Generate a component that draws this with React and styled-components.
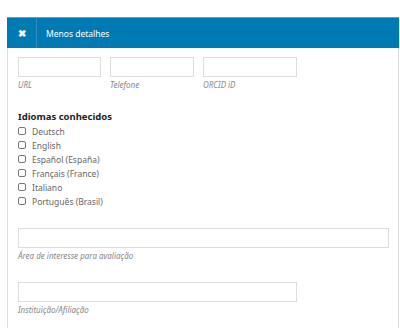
import React from "react";
import styled, { createGlobalStyle } from "styled-components";

const GlobalStyle = createGlobalStyle`
  body {
    margin: 0;
    background: #fff;
    font-family: "Noto Sans", "Open Sans", sans-serif;
  }
`;

const Panel = styled.div`
  margin: 17px 0 0 7px;
  width: 392px;
  height: 311px;
  box-sizing: border-box;
  border-left: 1px solid #ddd;
  border-right: 1px solid #ddd;
`;

const Header = styled.div`
  display: flex;
  align-items: stretch;
  height: 31px;
  box-sizing: border-box;
  background: #007ab2;
  border-top: 1px solid #4fa6cf;
  margin-left: -1px;
  margin-right: -1px;
  color: #fff;
`;

const CloseButton = styled.div`
  width: 29px;
  display: flex;
  align-items: center;
  justify-content: center;
  border-right: 1px solid #2b8fbf;
  font-size: 10px;
  font-weight: 700;
`;

const HeaderTitle = styled.div`
  display: flex;
  align-items: center;
  padding-left: 9px;
  font-size: 8.5px;
`;

const Body = styled.div`
  padding: 9px 0 0 10px;
`;

const Row = styled.div`
  display: flex;
  gap: 9px;
`;

const Field = styled.div`
  display: flex;
  flex-direction: column;
  width: ${(p) => p.$w}px;
  margin-top: ${(p) => p.$mt || 0}px;
`;

const TextBox = styled.div`
  height: 20px;
  box-sizing: border-box;
  border: 1px solid #ddd;
  background: #fff;
`;

const Label = styled.span`
  margin-top: 2px;
  font-size: 8px;
  font-style: italic;
  color: #888;
  line-height: 11px;
`;

const Heading = styled.div`
  margin-top: 20px;
  font-size: 9.5px;
  font-weight: 700;
  color: #222;
  line-height: 14px;
`;

const Options = styled.div`
  display: flex;
  flex-direction: column;
`;

const Option = styled.label`
  display: flex;
  align-items: center;
  gap: 6px;
  height: 14px;
  font-size: 8.5px;
  color: #666;
`;

const Box = styled.span`
  width: 8px;
  height: 8px;
  border: 1px solid #777;
  border-radius: 2px;
  box-sizing: border-box;
`;

const languages = [
  "Deutsch",
  "English",
  "Español (España)",
  "Français (France)",
  "Italiano",
  "Português (Brasil)",
];

export default function App() {
  return (
    <>
      <GlobalStyle />
      <Panel>
        <Header>
          <CloseButton>✖</CloseButton>
          <HeaderTitle>Menos detalhes</HeaderTitle>
        </Header>
        <Body>
          <Row>
            <Field $w={83}>
              <TextBox />
              <Label>URL</Label>
            </Field>
            <Field $w={84}>
              <TextBox />
              <Label>Telefone</Label>
            </Field>
            <Field $w={94}>
              <TextBox />
              <Label>ORCID iD</Label>
            </Field>
          </Row>
          <Heading>Idiomas conhecidos</Heading>
          <Options>
            {languages.map((l) => (
              <Option key={l}>
                <Box />
                {l}
              </Option>
            ))}
          </Options>
          <Field $w={371} $mt={20}>
            <TextBox />
            <Label>Área de interesse para avaliação</Label>
          </Field>
          <Field $w={279} $mt={21}>
            <TextBox />
            <Label>Instituição/Afiliação</Label>
          </Field>
        </Body>
      </Panel>
    </>
  );
}
